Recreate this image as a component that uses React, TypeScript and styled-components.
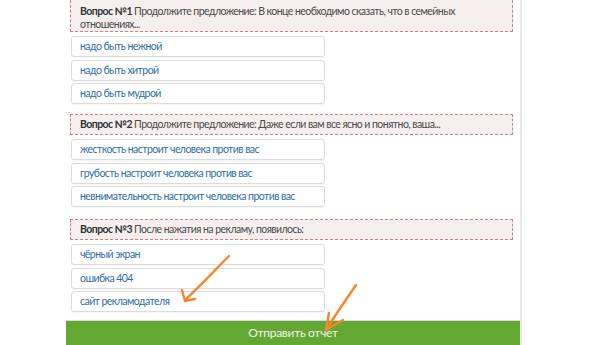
import React from 'react';
import styled, {createGlobalStyle} from 'styled-components';

const GlobalStyle = createGlobalStyle`
  html, body {
    margin: 0;
    padding: 0;
    background: #fff;
    overflow: hidden;
  }
  body {
    font-family: Lato, "Liberation Sans", Arial, sans-serif;
  }
`;

const Page = styled.div`
  position: relative;
  width: 591px;
  height: 345px;
  overflow: hidden;
`;

const Panel = styled.div`
  margin-left: 66px;
  width: 454px;
  border-right: 2px solid #e9e9e9;
  display: flex;
  flex-direction: column;
`;

const Body = styled.div`
  padding: 0 7px 0 4px;
  display: flex;
  flex-direction: column;
`;

const Question = styled.div<{$gap?: number}>`
  margin-top: ${p => p.$gap || 0}px;
  background: #f6efef;
  border: 1px dashed #cf7f86;
  padding: 3px 9px;
  font-size: 10.5px;
  letter-spacing: -0.55px;
  line-height: 13px;
  color: #4a4a4a;

  b {
    color: #333;
  }
`;

// the first box is cut by the top edge of the screenshot
const FirstQuestion = styled(Question)`
  border-top: none;
  padding-top: 5px;
  padding-bottom: 0;
`;

const Answers = styled.div`
  margin-top: 4px;
  display: flex;
  flex-direction: column;
  gap: 2.5px;
`;

const Answer = styled.div`
  width: 236px;
  height: 19px;
  line-height: 19px;
  padding: 0 8px;
  margin-left: 1px;
  border: 1px solid #dcdcdc;
  border-radius: 3px;
  box-shadow: 0 1px 1px rgba(0, 0, 0, 0.04);
  font-size: 10.5px;
  letter-spacing: -0.55px;
  color: #2f6ea5;
  background: #fff;
  white-space: nowrap;
`;

const SendButton = styled.div`
  margin-top: 8px;
  height: 24px;
  background: #63a833;
  border-top: 1px solid #dcdcdc;
  color: #f2f2f2;
  font-size: 12px;
  letter-spacing: -0.3px;
  line-height: 24px;
  text-align: center;
`;

const Overlay = styled.svg`
  position: absolute;
  left: 0;
  top: 0;
  pointer-events: none;
`;

const questions = [
  {
    n: 1,
    text: 'Продолжите предложение: В конце необходимо сказать, что в семейных отношениях...',
    answers: ['надо быть нежной', 'надо быть хитрой', 'надо быть мудрой'],
    gap: 0,
  },
  {
    n: 2,
    text: 'Продолжите предложение: Даже если вам все ясно и понятно, ваша...',
    answers: [
      'жесткость настроит человека против вас',
      'грубость настроит человека против вас',
      'невнимательность настроит человека против вас',
    ],
    gap: 10,
  },
  {
    n: 3,
    text: 'После нажатия на рекламу, появилось:',
    answers: ['чёрный экран', 'ошибка 404', 'сайт рекламодателя'],
    gap: 12,
  },
];

const Arrows = () => (
  <Overlay width="591" height="345" viewBox="0 0 591 345">
    <g fill="none" stroke="#f7862d" strokeWidth="2.4" strokeLinecap="round" strokeLinejoin="round">
      <path d="M229 256 C 215 270, 200 286, 185 300"/>
      <path d="M185 301 L182 290"/>
      <path d="M185 301 L195 299"/>
      <path d="M356 285 C 346 300, 335 315, 326 330"/>
      <path d="M326 330 L329 313"/>
      <path d="M326 330 L343 320"/>
    </g>
  </Overlay>
);

const App = () => (
  <Page>
    <GlobalStyle/>
    <Panel>
      <Body>
        {questions.map(q => {
          const Box = q.n === 1 ? FirstQuestion : Question;
          return (
            <React.Fragment key={q.n}>
              <Box $gap={q.gap}>
                <b>Вопрос №{q.n}</b> {q.text}
              </Box>
              <Answers>
                {q.answers.map(a => (
                  <Answer key={a}>{a}</Answer>
                ))}
              </Answers>
            </React.Fragment>
          );
        })}
      </Body>
      <SendButton>Отправить отчет</SendButton>
    </Panel>
    <Arrows/>
  </Page>
);

export default App;
